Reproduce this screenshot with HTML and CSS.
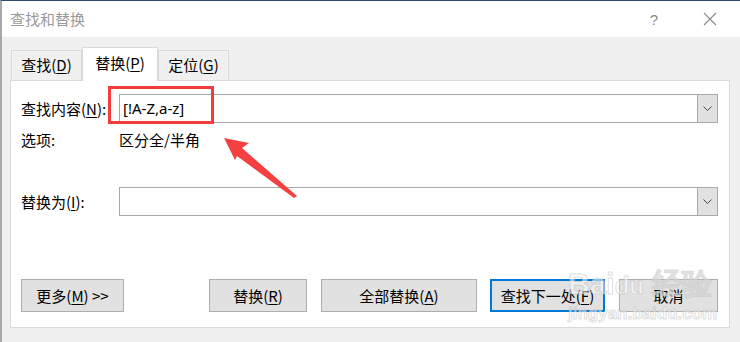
FILE: index.html
```html
<!DOCTYPE html>
<html lang="zh">
<head>
<meta charset="utf-8">
<link rel="stylesheet" href="styles.css">
</head>
<body>
<div class="window">
  <div class="titlebar">
    <span class="title">查找和替换</span>
    <span class="help">?</span>
    <svg class="close" width="14" height="14" viewBox="0 0 14 14"><path d="M1 1 L13 13 M13 1 L1 13" stroke="#8a8a8a" stroke-width="1.1" fill="none"/></svg>
  </div>
  <div class="body">
    <div class="tabs">
      <div class="tab">查找(<u>D</u>)</div>
      <div class="tab active">替换(<u>P</u>)</div>
      <div class="tab">定位(<u>G</u>)</div>
    </div>
    <div class="panel">
      <div class="row find-row">
        <label class="lbl">查找内容(<u>N</u>):</label>
        <div class="combo">
          <span class="value">[!A-Z,a-z]</span>
          <span class="drop"><svg width="9" height="6" viewBox="0 0 9 6"><path d="M0.5 0.5 L4.5 4.5 L8.5 0.5" stroke="#444" stroke-width="1" fill="none"/></svg></span>
        </div>
      </div>
      <div class="row opt-row">
        <span class="lbl">选项:</span>
        <span class="opt">区分全/半角</span>
      </div>
      <div class="row repl-row">
        <label class="lbl">替换为(<u>I</u>):</label>
        <div class="combo">
          <span class="value"></span>
          <span class="drop"><svg width="9" height="6" viewBox="0 0 9 6"><path d="M0.5 0.5 L4.5 4.5 L8.5 0.5" stroke="#444" stroke-width="1" fill="none"/></svg></span>
        </div>
      </div>
      <div class="buttons">
        <button class="btn more">更多(<u>M</u>) &gt;&gt;</button>
        <button class="btn replace">替换(<u>R</u>)</button>
        <button class="btn all">全部替换(<u>A</u>)</button>
        <button class="btn next">查找下一处(<u>F</u>)</button>
        <button class="btn cancel">取消</button>
      </div>
    </div>
  </div>
  <div class="highlight"></div>
  <svg class="arrow" width="100" height="80" viewBox="0 0 100 80">
    <polygon points="2,2 27,7 20,12 75,60 72,62 15,20 13,24" fill="#f44040"/>
  </svg>
  <div class="watermark">
    <span class="wm-logo">Bai<span class="paw">du</span> 经验</span>
    <span class="wm-url">jingyan.baidu.com</span>
  </div>
</div>
</body>
</html>
```

FILE: styles.css
```css
* { box-sizing: border-box; }
html, body {
  margin: 0;
  padding: 0;
  width: 740px;
  height: 342px;
  overflow: hidden;
  background: #f0f0f0;
  font-family: "Noto Sans CJK SC", "Noto Sans", sans-serif;
  color: #000;
}
u { text-decoration: underline; text-underline-offset: 2px; text-decoration-thickness: 1px; }
.window {
  position: relative;
  width: 740px;
  height: 342px;
  border-top: 1px solid #2e4a6e;
  border-left: 2px solid #a8a8a8;
  background: #f0f0f0;
}
.titlebar {
  height: 36px;
  background: #fff;
  display: flex;
  align-items: center;
  padding-left: 8px;
}
.title {
  font-size: 15px;
  color: #9a9a9a;
  line-height: 20px;
  flex: 1;
}
.help {
  font-size: 15px;
  color: #8a8a8a;
  font-family: "Liberation Sans", sans-serif;
  margin-right: 45px;
}
.close { margin-right: 23px; }
.body {
  padding: 10px 0 0 8px;
}
.tabs {
  display: flex;
  align-items: flex-end;
  height: 34px;
  padding-left: 1px;
  position: relative;
  z-index: 2;
  margin-bottom: -1px;
}
.tab {
  height: 30px;
  border: 1px solid #d9d9d9;
  border-bottom: none;
  background: #f0f0f0;
  font-size: 15px;
  line-height: 28px;
  padding: 0;
  width: 71px;
  white-space: nowrap;
  text-align: center;
  margin-bottom: 1px;
}
.tab.active {
  height: 34px;
  width: 76px;
  background: #fff;
  margin-bottom: 0;
  line-height: 30px;
  padding-bottom: 4px;
  border-color: #d9d9d9;
}
.panel {
  width: 720px;
  height: 248px;
  background: #fff;
  border: 1px solid #d9d9d9;
  padding: 13px 11px 0 10px;
}
.row {
  display: flex;
  align-items: center;
}
.lbl {
  width: 98px;
  font-size: 15px;
  line-height: 20px;
  white-space: nowrap;
}
.combo {
  flex: 1;
  height: 29px;
  border: 1px solid #a9a9a9;
  display: flex;
  align-items: stretch;
}
.value {
  flex: 1;
  padding-left: 3px;
  font-size: 15px;
  line-height: 26px;
  font-family: "Noto Sans", sans-serif;
}
.drop {
  width: 21px;
  background: #e1e1e1;
  border: 1px solid #a9a9a9;
  margin: -1px -1px -1px 0;
  display: flex;
  align-items: center;
  justify-content: center;
}
.opt-row { margin-top: 7px; }
.opt { font-size: 15px; line-height: 20px; }
.repl-row { margin-top: 37px; }
.buttons {
  display: flex;
  margin-top: 63px;
}
.btn {
  height: 33px;
  background: #e1e1e1;
  border: 1px solid #adadad;
  font-family: "Noto Sans CJK SC", sans-serif;
  font-size: 15px;
  color: #000;
  padding: 0;
  line-height: 20px;
  white-space: nowrap;
}
.more { width: 103px; }
.replace { width: 98px; margin-left: 85px; }
.all { width: 156px; margin-left: 14px; }
.next { width: 115px; margin-left: 13px; border: 2px solid #0078d7; }
.cancel { width: 99px; margin-left: 14px; }
.highlight {
  position: absolute;
  left: 106px;
  top: 85px;
  width: 106px;
  height: 38px;
  border: 3px solid #f33c3c;
}
.arrow {
  position: absolute;
  left: 220px;
  top: 135px;
}
.watermark {
  position: absolute;
  left: 566px;
  top: 266px;
  display: flex;
  flex-direction: column;
  color: rgba(255, 255, 255, 0.55);
  -webkit-text-stroke: 1px rgba(180, 180, 180, 0.45);
  font-family: "Liberation Sans", sans-serif;
  font-weight: bold;
  pointer-events: none;
}
.wm-logo { font-size: 30px; line-height: 34px; }
.paw { font-size: 24px; }
.wm-url { font-size: 17px; line-height: 22px; }
```
